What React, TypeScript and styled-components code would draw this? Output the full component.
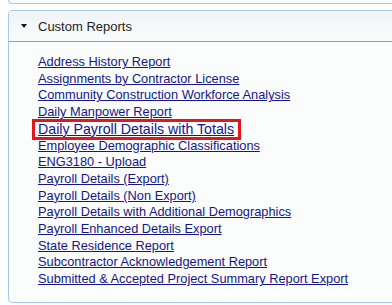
import React from "react";
import styled, { createGlobalStyle } from "styled-components";

const Global = createGlobalStyle`
  html, body { margin: 0; padding: 0; background: #ffffff; overflow: hidden; }
  body { font-family: "Liberation Sans", Arial, Helvetica, sans-serif; }
`;

const Page = styled.div`
  padding: 0 0 0 8px;
  width: 392px;
  box-sizing: border-box;
  overflow: hidden;
  display: flex;
  flex-direction: column;
  gap: 6px;
`;

const PrevPanel = styled.div`
  height: 3px;
  margin-right: -8px;
  border: 1px solid #a8c9e6;
  border-top: none;
  border-radius: 0 0 4px 4px;
  background: #fbfdfd;
`;

const Panel = styled.section`
  margin-right: -8px;
  border: 1px solid #a8c9e6;
  border-radius: 4px;
  background: #fbfdfd;
  overflow: hidden;
`;

const Header = styled.div`
  height: 30px;
  display: flex;
  align-items: center;
  gap: 11px;
  padding-left: 12px;
  border-top: 1px solid #6cabe0;
  border-bottom: 1px solid #6cabe0;
  margin-top: -1px;
  background: linear-gradient(to bottom, #f0f4f6, #f9fbfd);
  font-size: 13px;
  color: #1e1e1e;
`;

const Caret = styled.svg`
  width: 6px;
  height: 4px;
  display: block;
`;

const List = styled.ul`
  list-style: none;
  margin: 0;
  padding: 12px 0 14px 29px;
  display: flex;
  flex-direction: column;
  align-items: flex-start;
`;

const Item = styled.li<{ $highlight?: boolean }>`
  position: relative;
  font-size: ${(p) => (p.$highlight ? "14.2px" : "12.8px")};
  line-height: 16.7px;
  ${(p) =>
    p.$highlight
      ? `&::after {
          content: "";
          position: absolute;
          left: -6px;
          right: -7px;
          top: -2px;
          bottom: -2px;
          border: 3px solid #e8141b;
          pointer-events: none;
        }`
      : ""}
`;

const Link = styled.a`
  color: #16168a;
  text-decoration: underline;
`;

const reports = [
  "Address History Report",
  "Assignments by Contractor License",
  "Community Construction Workforce Analysis",
  "Daily Manpower Report",
  "Daily Payroll Details with Totals",
  "Employee Demographic Classifications",
  "ENG3180 - Upload",
  "Payroll Details (Export)",
  "Payroll Details (Non Export)",
  "Payroll Details with Additional Demographics",
  "Payroll Enhanced Details Export",
  "State Residence Report",
  "Subcontractor Acknowledgement Report",
  "Submitted & Accepted Project Summary Report Export",
];

export default function App() {
  return (
    <>
      <Global />
      <Page>
        <PrevPanel />
        <Panel>
          <Header>
            <Caret viewBox="0 0 6 4">
              <path d="M0 0 L6 0 L3 4 Z" fill="#111" />
            </Caret>
            <span>Custom Reports</span>
          </Header>
          <List>
            {reports.map((r, i) => (
              <Item key={r} $highlight={i === 4}>
                <Link href="#">{r}</Link>
              </Item>
            ))}
          </List>
        </Panel>
      </Page>
    </>
  );
}
